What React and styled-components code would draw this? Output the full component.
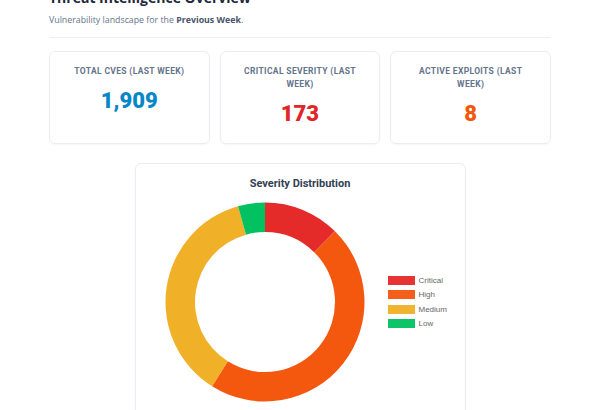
import React from "react";
import styled, { createGlobalStyle } from "styled-components";

const GlobalStyle = createGlobalStyle`
  html, body {
    margin: 0;
    padding: 0;
    background: #ffffff;
    overflow: hidden;
  }
  body {
    font-family: "Open Sans", "Liberation Sans", sans-serif;
  }
`;

const Page = styled.div`
  width: 502px;
  margin-left: 49px;
`;

const Header = styled.header`
  margin-top: -11px;
  padding-bottom: 10px;
  border-bottom: 1px solid #eceff3;
`;

const Title = styled.h1`
  margin: 0;
  font-family: "Open Sans", sans-serif;
  font-size: 14px;
  line-height: 18px;
  font-weight: 700;
  color: #1e293b;
`;

const Subtitle = styled.p`
  margin: 6px 0 0;
  font-size: 8.8px;
  line-height: 14px;
  color: #64748b;

  strong {
    color: #475569;
    font-weight: 700;
  }
`;

const Stats = styled.div`
  display: grid;
  grid-template-columns: repeat(3, 1fr);
  gap: 10px;
  margin-top: 13px;
`;

const StatCard = styled.div`
  display: flex;
  flex-direction: column;
  align-items: center;
  padding: 13px 14px 16px;
  border: 1px solid #eaedf1;
  border-radius: 6px;
  box-shadow: 0 1px 2px rgba(15, 23, 42, 0.04);
  text-align: center;
`;

const StatLabel = styled.div`
  font-family: Roboto, sans-serif;
  font-size: 8.5px;
  line-height: 13px;
  font-weight: 700;
  letter-spacing: 0.35px;
  text-transform: uppercase;
  color: #64748b;
`;

const StatValue = styled.div`
  margin-top: 10px;
  font-family: Roboto, sans-serif;
  font-size: 22px;
  line-height: 26px;
  font-weight: 900;
  color: ${(p) => p.$color};
`;

const ChartCard = styled.section`
  width: 331px;
  margin: 19px auto 0;
  padding: 8px 0 30px 29px;
  box-sizing: border-box;
  border: 1px solid #eaedf1;
  border-radius: 6px;
  box-shadow: 0 1px 2px rgba(15, 23, 42, 0.04);
`;

const ChartTitle = styled.h2`
  margin: 0 0 6px -29px;
  font-family: Roboto, sans-serif;
  font-size: 11px;
  line-height: 24px;
  font-weight: 700;
  text-align: center;
  color: #334155;
`;

const ChartBody = styled.div`
  display: flex;
  align-items: center;
  gap: 23px;
`;

const Legend = styled.ul`
  list-style: none;
  margin: 0;
  padding: 0;
  display: flex;
  flex-direction: column;
  gap: 5.5px;
`;

const LegendItem = styled.li`
  display: flex;
  align-items: center;
  gap: 4px;
  font-family: "Liberation Sans", Arial, sans-serif;
  font-size: 8px;
  line-height: 9px;
  color: #666666;
`;

const Swatch = styled.span`
  width: 25px;
  height: 7px;
  border: 1px solid ${(p) => p.$color};
  background: ${(p) => p.$color};
  opacity: 0.95;
`;

const stats = [
  { label: "Total CVEs (Last Week)", value: "1,909", color: "#0786c9" },
  { label: "Critical Severity (Last Week)", value: "173", color: "#e02626" },
  { label: "Active Exploits (Last Week)", value: "8", color: "#f2580c" },
];

const severities = [
  { name: "Critical", count: 173, color: "#e52a2a" },
  { name: "High", count: 649, color: "#f4580f" },
  { name: "Medium", count: 512, color: "#f0b027" },
  { name: "Low", count: 61, color: "#02c160" },
];

function arcPath(cx, cy, r0, r1, a0, a1) {
  const pt = (r, a) => [cx + r * Math.sin(a), cy - r * Math.cos(a)];
  const large = a1 - a0 > Math.PI ? 1 : 0;
  const [x0, y0] = pt(r1, a0);
  const [x1, y1] = pt(r1, a1);
  const [x2, y2] = pt(r0, a1);
  const [x3, y3] = pt(r0, a0);
  return `M${x0} ${y0} A${r1} ${r1} 0 ${large} 1 ${x1} ${y1} L${x2} ${y2} A${r0} ${r0} 0 ${large} 0 ${x3} ${y3} Z`;
}

function Donut({ data, size = 200 }) {
  const total = data.reduce((s, d) => s + d.count, 0);
  const c = size / 2;
  let start = 0;
  return (
    <svg width={size} height={size} viewBox={`0 0 ${size} ${size}`}>
      {data.map((d) => {
        const end = start + (d.count / total) * Math.PI * 2;
        const path = arcPath(c, c, 70, 99.5, start, end);
        start = end;
        return <path key={d.name} d={path} fill={d.color} />;
      })}
    </svg>
  );
}

export default function App() {
  return (
    <Page>
      <GlobalStyle />
      <Header>
        <Title>Threat Intelligence Overview</Title>
        <Subtitle>
          Vulnerability landscape for the <strong>Previous Week</strong>.
        </Subtitle>
      </Header>
      <Stats>
        {stats.map((s) => (
          <StatCard key={s.label}>
            <StatLabel>{s.label}</StatLabel>
            <StatValue $color={s.color}>{s.value}</StatValue>
          </StatCard>
        ))}
      </Stats>
      <ChartCard>
        <ChartTitle>Severity Distribution</ChartTitle>
        <ChartBody>
          <Donut data={severities} />
          <Legend>
            {severities.map((s) => (
              <LegendItem key={s.name}>
                <Swatch $color={s.color} />
                {s.name}
              </LegendItem>
            ))}
          </Legend>
        </ChartBody>
      </ChartCard>
    </Page>
  );
}
